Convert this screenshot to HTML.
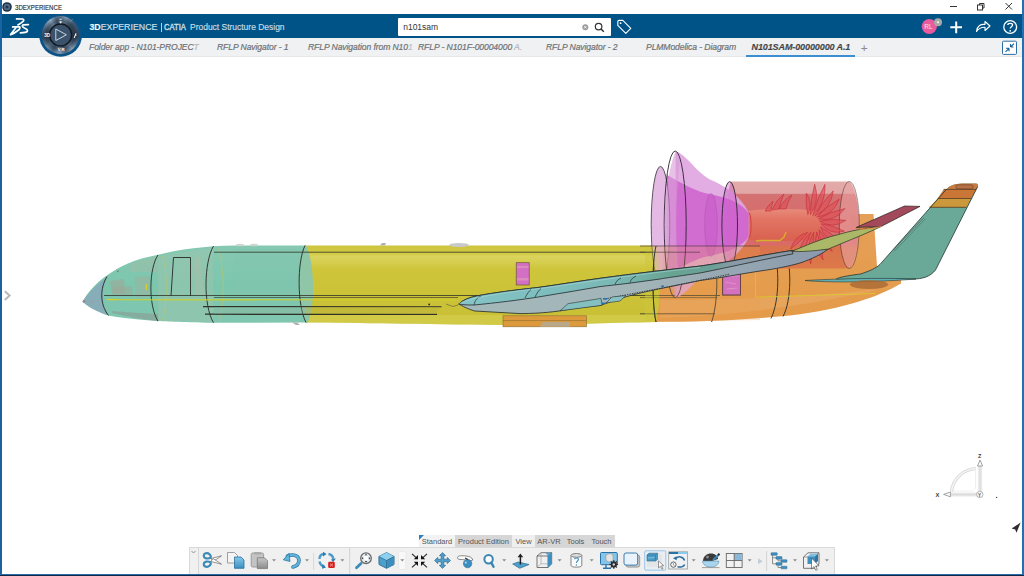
<!DOCTYPE html>
<html><head><meta charset="utf-8">
<style>
*{margin:0;padding:0;box-sizing:border-box}
html,body{width:1024px;height:576px;overflow:hidden;background:#fff;font-family:"Liberation Sans",sans-serif}
.abs{position:absolute}
#titletxt{left:15.2px;top:2.8px;font-size:7.6px;line-height:9px;color:#2a2a2a;-webkit-text-stroke:0.15px #2a2a2a;transform:scaleX(0.8);transform-origin:0 0}
#hdr{left:0;top:14px;width:1024px;height:24px;background:#005386}
#tabs{left:0;top:38px;width:1024px;height:19px;background:#f0f1f3;border-bottom:1px solid #e4e6e8}
.tab{position:absolute;top:42px;font-size:8.6px;line-height:10px;font-style:italic;color:#6e7175;white-space:nowrap;letter-spacing:-0.1px;-webkit-text-stroke:0.2px #6e7175}
.brand{position:absolute;top:21.6px;font-size:8.8px;line-height:11px;color:#cfe0ec;white-space:nowrap;-webkit-text-stroke:0.15px #cfe0ec}
.brand b{color:#fff}
#search{left:398px;top:18px;width:212.5px;height:18px;background:#fff;border-radius:1px}
#search span{position:absolute;left:5.2px;top:4px;font-size:8.5px;line-height:10px;color:#333}
.ttab{position:absolute;top:535px;height:13px;font-size:7.5px;line-height:13px;color:#555;text-align:center;background:#d6d6d6}
#tb{left:189px;top:547px;width:646px;height:27px;background:#f0f0f0;border:1px solid #d9d9d9;border-bottom:none}
.sep{position:absolute;top:551px;width:1px;height:22px;background:#d4d4d4}
.dd{position:absolute;top:560px;width:0;height:0;border-left:2.5px solid transparent;border-right:2.5px solid transparent;border-top:2.5px solid #8a8a8a}
</style></head><body>
<!-- title bar -->
<svg class="abs" style="left:0;top:0" width="1024" height="14">
  <circle cx="7" cy="7" r="4.8" fill="#1c2e40"/>
  <circle cx="7" cy="7" r="3.3" fill="#4e6c88"/>
  <circle cx="7" cy="7" r="1.5" fill="#22364a"/>
  <line x1="950" y1="6.5" x2="957" y2="6.5" stroke="#333" stroke-width="1"/>
  <rect x="977.5" y="5" width="5" height="5" fill="none" stroke="#333" stroke-width="1"/>
  <path d="M979.5 5 V3.5 H984 V8 H982.5" fill="none" stroke="#333" stroke-width="1"/>
  <path d="M1005.5 3 L1012 9.5 M1012 3 L1005.5 9.5" stroke="#333" stroke-width="1"/>
</svg>
<div id="titletxt" class="abs">3DEXPERIENCE</div>
<div id="hdr" class="abs"></div>
<div id="tabs" class="abs"></div>
<!-- borders -->
<div class="abs" style="left:0;top:0;width:1.6px;height:576px;background:#1b62a0"></div>
<div class="abs" style="left:1022px;top:0;width:2px;height:576px;background:#2070b8"></div>
<div class="abs" style="left:0;top:574px;width:1024px;height:1px;background:#2a6aa6"></div>
<div class="abs" style="left:0;top:575px;width:1024px;height:1px;background:#0a2a48"></div>

<!-- 3DS logo -->
<svg class="abs" style="left:0;top:14px" width="90" height="44" viewBox="0 14 90 44">
  <g fill="none" stroke="#fff" stroke-width="1.75" stroke-linecap="round" stroke-linejoin="round">
    <path d="M16.6 18.9 L22.4 19 C24.2 19.2 24 20.6 22.8 21.6 C21.5 22.8 19.8 23.8 17.9 24.9"/>
    <path d="M12.7 26.9 L19.6 26.9 C20.4 27.2 19.8 29 18.6 30 C16.5 31.8 13.5 33.6 10.6 34.6 C12.2 32.3 14.2 30 15.7 28"/>
    <path d="M28.4 24.6 L23.6 24.8 C21.6 25.2 22.2 26.9 24.4 28 C26.6 29 28.2 30 27.2 31.6 C26.4 32.8 23.5 32.8 20.4 32.8"/>
  </g>
  <circle cx="60.6" cy="35.3" r="21.4" fill="#0a5386"/>
</svg>
<div class="abs" style="left:41.7px;top:16.4px;width:37.8px;height:37.8px;border-radius:50%;background:conic-gradient(from 0deg,#56708a 0deg,#7e98b0 18deg,#465e78 45deg,#3a5068 75deg,#2c4056 95deg,#4a6480 115deg,#86a0b6 140deg,#4e6882 162deg,#8aa4ba 185deg,#4a6480 205deg,#6e88a2 228deg,#30465c 262deg,#4a627c 290deg,#7e98b0 315deg,#9ab2c6 325deg,#506a84 345deg,#56708a 360deg)"></div>
<div class="abs" style="left:41.7px;top:16.4px;width:37.8px;height:37.8px;border-radius:50%;background:radial-gradient(circle,rgba(20,30,42,0.4) 54%,rgba(20,30,42,0) 68%,rgba(20,30,42,0) 90%,rgba(16,26,38,0.4) 100%)"></div>
<svg class="abs" style="left:36px;top:14px" width="50" height="44" viewBox="36 14 50 44">
  <circle cx="60.6" cy="35" r="11" fill="#3a526c" stroke="#141a22" stroke-width="1.5"/>
  <path d="M55.8 29 L66.4 34.8 L55.8 40.5 Z" fill="none" stroke="#c9d5df" stroke-width="1" stroke-linejoin="round"/>
  <text x="44.3" y="37.3" font-size="4.6" font-weight="bold" fill="#fff" font-family="Liberation Sans">3D</text>
  <text x="57.8" y="50.7" font-size="4.3" font-weight="bold" fill="#fff" font-family="Liberation Sans">V,R</text>
  <path d="M59.4 19.3 L61.8 19.3 M59.2 21.3 L60.6 23.2 L62 21.3 M60.6 20.8 V23.2" stroke="#fff" stroke-width="0.8" fill="none"/>
  <path d="M74.2 38 L75.9 33.3 M75.1 35.2 L76.6 35" stroke="#fff" stroke-width="1"/>
  <path d="M70 22 L73 19" stroke="#9ab0c4" stroke-width="0.6" opacity="0.7"/>
</svg>
<div class="abs brand" style="left:89.4px"><b>3D</b>EXPERIENCE</div>
<div class="abs" style="left:161px;top:23px;width:1px;height:8.6px;background:#b8cfe0"></div>
<div class="abs brand" style="left:164.1px;transform:scaleX(0.87);transform-origin:0 0;-webkit-text-stroke:0.35px #cfe0ec">CATIA</div>
<div class="abs brand" style="left:190.3px;transform:scaleX(0.962);transform-origin:0 0;color:#c4d8e8">Product Structure Design</div>

<!-- search -->
<div id="search" class="abs"><span>n101sam</span></div>
<svg class="abs" style="left:560px;top:14px" width="90" height="24" viewBox="560 14 90 24">
  <circle cx="585.3" cy="27.2" r="3" fill="#9a9a9a"/>
  <path d="M584 25.9 L586.6 28.5 M586.6 25.9 L584 28.5" stroke="#fff" stroke-width="0.8"/>
  <circle cx="598.6" cy="26.6" r="3.3" fill="none" stroke="#333" stroke-width="1.2"/>
  <path d="M601 29 L603.8 31.8" stroke="#333" stroke-width="1.5"/>
  <path d="M617.8 25.3 L617.8 21.8 Q617.8 20.4 619.2 20.4 L622.8 20.4 L630.8 28.4 L625.8 33.4 Z" fill="none" stroke="#fff" stroke-width="1.1" stroke-linejoin="round"/>
  <circle cx="620.6" cy="23.2" r="0.9" fill="#fff"/>
</svg>

<!-- right header icons -->
<svg class="abs" style="left:900px;top:14px" width="124" height="44" viewBox="900 14 124 44">
  <circle cx="929.3" cy="26.5" r="7.6" fill="#ea5a9c"/>
  <text x="924.2" y="29.4" font-size="6.5" fill="#fde4ef" font-family="Liberation Sans">RL</text>
  <circle cx="938" cy="22.3" r="4" fill="#a9a9a9"/>
  <circle cx="938" cy="22.3" r="1" fill="#fff"/>
  <path d="M950.3 27.3 H962 M956.2 21.5 V33.2" stroke="#fff" stroke-width="2"/>
  <path d="M976.5 31.5 C977 26 980.5 24 985 24.5 L985 21.5 L990 26 L985 30.5 L985 27.2 C981 27 978.5 28.5 976.5 31.5 Z" fill="none" stroke="#fff" stroke-width="1.1" stroke-linejoin="round"/>
  <circle cx="1010.2" cy="27" r="6.4" fill="none" stroke="#fff" stroke-width="1.3"/>
  <path d="M1007.8 25 C1007.8 22.8 1012.6 22.8 1012.6 25 C1012.6 26.6 1010.2 26.8 1010.2 28.6" fill="none" stroke="#fff" stroke-width="1.3"/>
  <circle cx="1010.2" cy="30.8" r="0.9" fill="#fff"/>
  <rect x="1002.5" y="41.2" width="14" height="13.2" rx="1" fill="#fff" stroke="#2e6ea4" stroke-width="1"/>
  <path d="M1005.5 51.8 L1009 48.3 M1009 48.3 L1006 48.3 M1009 48.3 L1009 51.3 M1014 43.6 L1010.5 47 M1010.5 47 L1013.5 47 M1010.5 47 L1010.5 44" stroke="#1d5f96" stroke-width="1.1" fill="none"/>
</svg>

<!-- tabs -->
<div class="tab" style="left:89px">Folder app - N101-PROJEC<span style="opacity:.45">T</span></div>
<div class="tab" style="left:217px">RFLP Navigator - 1</div>
<div class="tab" style="left:308px">RFLP Navigation from N10<span style="opacity:.4">1</span></div>
<div class="tab" style="left:418px">RFLP - N101F-00004000 <span style="opacity:.5">A.</span></div>
<div class="tab" style="left:546px">RFLP Navigator - 2</div>
<div class="tab" style="left:646px">PLMModelica - Diagram</div>
<div class="tab" style="left:751.5px;font-size:9px;font-weight:bold;color:#3b3e42">N101SAM-00000000 A.1</div>
<div class="abs" style="left:746px;top:54.5px;width:109px;height:2px;background:#3b8fd0"></div>
<div class="tab" style="left:861px;top:42.5px;font-style:normal;font-size:11px;color:#a0a3a6">+</div>


<!-- AIRPLANE -->
<svg class="abs" style="left:0;top:0" width="1024" height="576" viewBox="0 0 1024 576">
<defs>
  <linearGradient id="yel" x1="0" y1="0" x2="0" y2="1">
    <stop offset="0" stop-color="#cdc53c"/>
    <stop offset="0.1" stop-color="#d2ca45"/>
    <stop offset="0.14" stop-color="#dad45e"/>
    <stop offset="0.3" stop-color="#cec53a"/>
    <stop offset="1" stop-color="#c9bf35"/>
  </linearGradient>
  <linearGradient id="teal" x1="0" y1="0" x2="0" y2="1">
    <stop offset="0" stop-color="#86c9b2"/>
    <stop offset="0.5" stop-color="#7dc6ae"/>
    <stop offset="1" stop-color="#80c6b0"/>
  </linearGradient>
  <linearGradient id="org" x1="0" y1="0" x2="0" y2="1">
    <stop offset="0" stop-color="#e5a058"/>
    <stop offset="1" stop-color="#e49a48"/>
  </linearGradient>
  <linearGradient id="redc" x1="0" y1="0" x2="0" y2="1">
    <stop offset="0" stop-color="#e2a6a6"/>
    <stop offset="0.135" stop-color="#e0a2a2"/>
    <stop offset="0.15" stop-color="#d26a6a"/>
    <stop offset="0.72" stop-color="#d66260"/>
    <stop offset="0.75" stop-color="#d8704e"/>
    <stop offset="1" stop-color="#dc7648"/>
  </linearGradient>
  <linearGradient id="spin" x1="0" y1="0" x2="0" y2="1">
    <stop offset="0" stop-color="#e88a7a"/>
    <stop offset="0.3" stop-color="#e27565"/>
    <stop offset="1" stop-color="#d8604e"/>
  </linearGradient>
</defs>

<!-- ===== FUSELAGE ===== -->
<!-- orange rear fuselage -->
<path d="M650 245.5 L851 245.5 L851 214 L873.5 214 L877 266 L901 274 L901 283.5 C880 296 845 309 790 315.5 C740 320.5 700 322 650 322 Z" fill="url(#org)"/>
<path d="M660 300 C720 300 800 298 890 288 L896 285 C840 300 760 312 700 316 L660 318 Z" fill="#eab070" opacity="0.45"/>
<!-- yellow fuselage -->
<path d="M306 245.5 L656 245.5 C661 265 661 305 656 322 C600 323 560 325.5 500 325 C420 324 360 323 306 322.5 Z" fill="url(#yel)"/>
<path d="M306 315 L656 315 L656 322 C600 323 560 325.5 500 325 C420 324 360 323 306 322.5 Z" fill="#dcd65a" opacity="0.45"/>
<!-- teal forward fuselage -->
<path d="M83 301 C87 293 96 283 106 276 C120 266 135 259 157 255 C180 249 205 246 235 245.5 L306 245.5 C311 265 314 290 312.5 300 C312 310 310 318 307.5 322.5 L212 322.8 C180 322 165 321.5 157 321 C130 319 115 317 106 315 C96 310 88 305 83 301 Z" fill="url(#teal)"/>
<!-- lighter band before yellow -->
<path d="M305 245.5 C297 265 297 305 306 322.5 L307.5 322.5 C312 310 314 290 312.5 275 C312 262 309 252 306 245.5 Z" fill="#90c6a8"/>
<!-- nose cone -->
<path d="M82.6 301.5 C86 296 96 284 108 276.7 C101 288 100.5 304 108.7 315.1 C100 313 90 309 82.6 301.5 Z" fill="#87aeb8"/>
<circle cx="84" cy="301.5" r="1.4" fill="#8a8e92"/>
<circle cx="92" cy="302" r="1.2" fill="#a09ca4"/>
<!-- cockpit interior shades -->
<path d="M110 281 L124 279 L125 293 L112 294 Z" fill="#a2a698" opacity="0.55"/>
<path d="M112 287 L132 286 L133 296 L113 296 Z" fill="#a0a494" opacity="0.45"/>
<path d="M135 277 L150 276 L150 297 L135 297 Z" fill="#a4ae9c" opacity="0.45"/>
<path d="M130 264 C140 260 150 258 158 256 L158 272 L130 272 Z" fill="#a8b8a4" opacity="0.4"/>
<path d="M112 313 C125 316 140 319 158 321.2 L158 314 C140 313 125 312 112 311 Z" fill="#8a9890" opacity="0.55"/>
<path d="M158 256 L213 248 L213 322 L158 321 Z" fill="#a9c2ae" opacity="0.35"/>
<path d="M193 258 L200 256 L204 296 L196 296 Z" fill="#b0bca8" opacity="0.4"/>
<path d="M235 249 L300 249 L300 296 L235 296 Z" fill="#86c4ae" opacity="0.3"/>
<path d="M106.7 299.5 L117 299.5" stroke="#e0d020" stroke-width="1.2"/>
<path d="M146.5 284 L146.5 290" stroke="#d8cc30" stroke-width="1.4"/>
<path d="M117 272 L119 270.5" stroke="#555" stroke-width="0.7"/>
<!-- frame rings -->
<g fill="none" stroke="#252a26" stroke-width="0.9">
  <path d="M107 276.5 C100 288 99.5 304 108.5 315.5"/>
  <path d="M158 255 C149 268 148 305 158 321.2"/>
  <path d="M213.5 246 C204 262 203 305 213.5 322.8"/>
  <path d="M305 245.5 C297 262 297 305 306 322.5"/>
  <path d="M656 246 C652 262 652 305 656 322"/>
  <path d="M712 246 C718 262 719 300 711.6 322"/>
  <path d="M774 250 C779 265 780 300 771 318.5"/>
  <path d="M786 250 C791 265 792 300 783 316.5"/>
  <path d="M171 296 L173.5 257.5 L190.5 257.5 L190.5 296"/>
</g>
<g fill="none" stroke="#c8c860" stroke-width="0.6" opacity="0.8">
  <path d="M218 248 C224 262 225 305 219 322"/>
  <path d="M162 256 C168 270 168 305 162 321"/>
</g>
<!-- longitudinal lines -->
<g stroke="#2e3226" stroke-width="0.8" fill="none">
  <path d="M214 252.2 L655 252.2"/>
  <path d="M104 295.5 L720 295.5"/>
  <path d="M214 297.5 L458 297.5" stroke-width="0.6"/>
  <path d="M203 306.6 L441.5 306.8" stroke-width="1.1"/>
  <path d="M205 314.2 L437 314.4" stroke-width="1.3"/>
  <path d="M640 313.8 L715 313.8"/>
  <path d="M640 297.6 L717 297.6" stroke-width="0.6"/>
</g>
<path d="M306 307 L440 307 L436 314 L306 314 Z" fill="#b9b03e" opacity="0.45"/>
<path d="M214 307 L306 307 L306 314 L214 314 Z" fill="#8fae98" opacity="0.35"/>
<path d="M110 299.7 L456 300" stroke="#cfd02a" stroke-width="1.1"/>
<circle cx="429.2" cy="304.4" r="0.9" fill="#222"/>
<path d="M446 304 L450 305.5 L453 306.5 L458 305" stroke="#444" stroke-width="0.5" fill="none"/>
<path d="M755 297.2 L875 293.5 M755.5 240 L755.5 297" stroke="#d9cd2a" stroke-width="0.8" fill="none"/>
<!-- top bumps -->
<ellipse cx="240" cy="245" rx="4" ry="1.2" fill="#cfd6d0"/>
<ellipse cx="254" cy="245" rx="4" ry="1.2" fill="#cfd6d0"/>
<path d="M380 245.5 L382 243 L386 243 L385 245.5 Z" fill="#b0b0b0"/>
<ellipse cx="459" cy="245" rx="10" ry="2" fill="#c9c9c9"/>
<path d="M292 322.5 L296 325 L300 325 L297 322.5 Z" fill="#b0b0b0"/>
<!-- pink windows -->
<rect x="516.2" y="262.7" width="13" height="22.3" fill="#d46fc6" stroke="#6a5a30" stroke-width="0.7"/>
<rect x="517" y="266" width="11.5" height="2" fill="#e09ab8" opacity="0.7"/>
<rect x="517" y="278" width="11.5" height="2.5" fill="#e09ab8" opacity="0.7"/>
<rect x="722.7" y="272" width="17.7" height="23" fill="#d46ec8" stroke="#5a3a40" stroke-width="0.8"/>
<!-- belly fairing -->
<rect x="503" y="315.8" width="83.5" height="11" fill="#dd9a3c" stroke="#8a6a30" stroke-width="0.6"/>
<path d="M503 320.6 L586 320.6" stroke="#8a6a30" stroke-width="0.6"/>
<path d="M540 326.8 L543 322 L570 322 L570 326.8 Z" fill="#b8a888"/>

<!-- ===== ENGINE ===== -->
<path d="M731 181.5 L849.3 181.5 C862 195 862 255 849.3 268.5 L731 268.5 C725 255 725 195 731 181.5 Z" fill="url(#redc)" opacity="0.95"/>
<ellipse cx="849.3" cy="225" rx="10" ry="43.5" fill="#eaa6a6" opacity="0.55" stroke="#2a2020" stroke-width="0.8"/>
<!-- spinner cone -->
<path d="M747 211 C770 208 800 209 817 211 L822 225 L817 239.5 C800 241 770 242 747 239.5 Z" fill="url(#spin)"/>
<ellipse cx="748.5" cy="225.2" rx="2.6" ry="13" fill="#e07868" stroke="#cc3a3a" stroke-width="0.9"/>
<!-- fan blades -->
<g fill="#de4c54" fill-opacity="0.6" stroke="#c42a3a" stroke-width="0.6" stroke-opacity="0.95">
<path d="M807.8 214.5 Q813.6 203.3 806.3 193.1 Q805.2 203.9 807.8 214.5 Z"/>
<path d="M810.4 214.7 Q820.0 200.5 814.7 184.2 Q810.5 199.2 810.4 214.7 Z"/>
<path d="M812.7 215.6 Q826.2 202.9 825.0 184.3 Q816.8 199.2 812.7 215.6 Z"/>
<path d="M814.7 216.1 Q831.1 208.7 833.2 190.9 Q822.1 202.1 814.7 216.1 Z"/>
<path d="M816.6 217.1 Q833.6 215.4 839.2 199.2 Q826.3 206.2 816.6 217.1 Z"/>
<path d="M818.3 218.8 Q834.9 222.4 844.9 208.6 Q830.7 211.4 818.3 218.8 Z"/>
<path d="M819.5 221.1 Q833.0 229.5 845.8 220.3 Q832.6 218.3 819.5 221.1 Z"/>
<path d="M821.0 223.7 Q830.1 235.4 844.3 231.2 Q833.3 225.3 821.0 223.7 Z"/>
<path d="M820.6 226.9 Q824.6 240.9 839.1 241.8 Q831.3 232.6 820.6 226.9 Z"/>
<path d="M819.1 229.8 Q818.6 244.9 832.3 251.3 Q827.6 239.4 819.1 229.8 Z"/>
<path d="M816.8 232.0 Q812.2 247.7 823.1 259.9 Q822.1 245.5 816.8 232.0 Z"/>
<path d="M813.7 232.2 Q804.7 247.3 810.7 263.9 Q814.2 248.2 813.7 232.2 Z"/>
<path d="M810.9 232.3 Q797.9 243.7 797.8 261.0 Q806.1 247.5 810.9 232.3 Z"/>
<path d="M807.8 232.3 Q794.6 235.9 790.6 249.0 Q800.4 242.0 807.8 232.3 Z"/>
<path d="M772 210 Q776 200 784 194 Q780 203 779 209 Z"/>
<path d="M779 209 Q784 199 792 195 Q787 203 786 209 Z"/>
<path d="M765 211 Q768 205 773 201 Q771 207 771 211 Z"/>
</g>
<!-- yellow pipe -->
<path d="M756 241 L760 240.5 L780 240.5 L784 237 L786 232" stroke="#d7b02a" stroke-width="1.3" fill="none"/>

<!-- ===== NOZZLE (magenta) ===== -->
<path d="M675.6 151 C688 156 694 170 710 179.5 C725 186 740 195 748.5 212 L748.5 238 C740 255 725 264 710 270.5 C694 280 688 294 675.6 297.8 Z" fill="#dfa6df" opacity="0.92"/>
<path d="M667 175 C680 182 695 192 712 194.5 C728 198 742 203 748.5 213 L748.5 237 C742 247 728 252 712 255.5 C695 258 680 268 667 275 Z" fill="#cd5dcd" opacity="0.8"/>
<ellipse cx="660.5" cy="224.4" rx="9.3" ry="58" fill="#dfb0de" opacity="0.85" stroke="#2a2230" stroke-width="0.9"/>
<path d="M652 224 C652 200 655 175 660.5 166.5 C662 170 664 185 664 224 C664 260 662 275 660.5 282.5 C655 275 652 250 652 224 Z" fill="#e4b8e4" opacity="0.6"/>
<ellipse cx="675.2" cy="224.4" rx="11" ry="73.4" fill="none" stroke="#2a2230" stroke-width="0.9"/>
<path d="M675.6 151 C668 170 664.5 200 664.5 224 C664.5 250 668 280 675.6 297.8 L680 290 C675 250 675 200 680 160 Z" fill="#d79ad6" opacity="0.6"/>
<ellipse cx="711" cy="225" rx="6.3" ry="31.5" fill="#c858c8" opacity="0.5" stroke="#8a4a90" stroke-width="0.6"/>
<ellipse cx="729.7" cy="225" rx="7.8" ry="43.3" fill="#cc5ccc" fill-opacity="0.4" stroke="#2a2230" stroke-width="0.9"/>

<!-- fuselage overlay over nozzle -->
<path d="M656 246 L760 246 L760 320 L656 322 C661 305 661 265 656 246 Z" fill="#e8a050" opacity="0.25"/>
<path d="M645 246 L656 246 C661 265 661 305 656 322 L645 322 Z" fill="#cdc53c" opacity="0.45"/>
<path d="M640 246 L760 246 M640 252.2 L700 252.2" stroke="#3a2a30" stroke-width="0.7" opacity="0.8"/>
<path d="M656 246 C652 262 652 305 656 322" fill="none" stroke="#252a26" stroke-width="0.9"/>
<rect x="722.7" y="272" width="17.7" height="23" fill="#d070c4" opacity="0.75"/>
<path d="M725 276 L738 276 M725 282 L736 284 M727 289 L737 288" stroke="#e8a0d0" stroke-width="1" opacity="0.7"/>
<rect x="722.7" y="272" width="17.7" height="23" fill="none" stroke="#5a3a40" stroke-width="0.8"/>
<!-- ===== MAIN WING ===== -->
<defs>
  <linearGradient id="leb" x1="460" y1="0" x2="800" y2="0" gradientUnits="userSpaceOnUse">
    <stop offset="0" stop-color="#84c4c6"/>
    <stop offset="0.45" stop-color="#7ab8b6"/>
    <stop offset="0.62" stop-color="#68a492"/>
    <stop offset="0.74" stop-color="#6aa096"/>
    <stop offset="0.8" stop-color="#8a9aa6"/>
    <stop offset="1" stop-color="#8a98a6"/>
  </linearGradient>
  <linearGradient id="msf" x1="460" y1="0" x2="830" y2="0" gradientUnits="userSpaceOnUse">
    <stop offset="0" stop-color="#a4b8ba"/>
    <stop offset="0.5" stop-color="#a2b4b8"/>
    <stop offset="1" stop-color="#8a98ac"/>
  </linearGradient>
</defs>
<!-- main surface -->
<path d="M458.8 304 C463 300 469 297.5 476.4 296 C495 292.5 515 290 538 287.5 C560 284.5 580 281 600 278.3 C635 273.5 665 270 700 266.1 C735 261 765 254.5 792 250.5 L828.3 249 C822 254 812 259 800 263 C790 266 775 269 760 271 C740 274 720 278 700 280.5 C680 285 650 290 627 296.5 C618 299 610 302 600 305.5 C585 307 570 309 559 311 C545 313 530 313.6 520 313.6 L474.6 311 C468 309 462 306 458.8 304 Z" fill="url(#msf)" stroke="#22292b" stroke-width="0.8"/>
<!-- flaps -->
<path d="M560 310.8 L568 303.7 L601 298.4 L602 305.3 Z" fill="#84c0c0" stroke="#2a3436" stroke-width="0.6"/>


<path d="M605 299 C640 292 680 285 730 274" fill="none" stroke="#3a4446" stroke-width="1" stroke-dasharray="1.5 1"/>
<path d="M606 303 L612 297 L626 295.5 L620 301 Z" fill="#88c2c2" stroke="#2a3436" stroke-width="0.6"/>

<g fill="#2a70b0"><rect x="603" y="298" width="4" height="1.6"/><rect x="602" y="302.5" width="4" height="1.6"/><rect x="661" y="285.5" width="3" height="1.4"/></g>
<!-- leading edge band -->
<path d="M458.8 304 C463 300 469 297.5 476.4 296 C495 292.5 515 290 538 287.5 C560 284.5 580 281 600 278.3 C635 273.5 665 270 700 266.1 C735 261 765 254.5 792 250.5 L793 253.8 C765 259 735 266 700 273 C680 276 665 278 660 279 C640 282 620 284.5 600 286.6 C580 290 560 293.5 540 296.7 C520 300 495 303 474 305 C467 305 462 304.8 458.8 304 Z" fill="url(#leb)" stroke="#22292b" stroke-width="0.8"/>
<path d="M474 305 C475 300 477.5 297.5 481 296" stroke="#22292b" stroke-width="0.7" fill="none"/>
<path d="M459.5 303.5 C470 298.5 490 294 540 288.5 C600 280 660 271.5 700 267.5" stroke="#a8dada" stroke-width="0.8" fill="none" opacity="0.7"/>
<path d="M525 298 C527 294 529 291 531 289.5 M535 297 C537 293 539 290 541 288.5 M615 284.5 C616 281.5 618 279.5 621 278 M630 282.5 C631 279.5 633 277.5 636 276" stroke="#22292b" stroke-width="0.7" fill="none"/>
<!-- olive wingtip -->
<path d="M791.7 251.4 C805 246 820 239 838.6 234.5 C850 231 865 228 881 226.5 C870 232 850 240 828.3 249 C815 251 800 252 791.7 251.4 Z" fill="#abb868" stroke="#2a3020" stroke-width="0.7"/>
<!-- winglet maroon -->
<path d="M856 227.5 L904.5 206 L920 206.4 L881 226.5 Z" fill="#a24a5c" stroke="#2a2020" stroke-width="0.7"/>
<path d="M855 228 C860 230 870 229 881 226.5" stroke="#d88a40" stroke-width="1.2" fill="none"/>

<!-- ===== VERTICAL TAIL ===== -->
<path d="M946.7 189 C950 185.5 955 183.8 962 183.6 L976 183.6 C978 183.8 978.3 185 977.7 186.5 L935.5 270 C930 277 922 279 913 279 L836 279.5 C836 278 845 276 860.5 274 C870 271 876 268 880 264.4 Z" fill="#6aa998"/>
<path d="M946.7 189 C950 185.5 955 183.8 962 183.6 L976 183.6 C978 183.8 978.3 185 977.7 186.5 L976.2 189.4 L943.6 189.4 Z" fill="#c97c44"/>
<rect x="956" y="184.8" width="17" height="4" rx="1.5" fill="#b87048" stroke="#6a4020" stroke-width="0.6"/>
<path d="M943.6 189.4 L976.2 189.4 L971.1 198.5 L937.7 198.5 Z" fill="#c97636"/>
<path d="M937.7 198.5 L971.1 198.5 L966.4 207.3 L929.4 207.3 Z" fill="#cb983c"/>
<path d="M943.6 189.4 L976.2 189.4 M937.7 198.5 L971.1 198.5 M929.4 207.3 L966.4 207.3" stroke="#5a3a20" stroke-width="0.8"/>
<path d="M924.4 218.6 L893.9 250.5" stroke="#4e7e74" stroke-width="2.2" />
<path d="M924.4 218.6 L893.9 250.5" stroke="#9ac4b8" stroke-width="0.8" />
<path d="M946.7 189 L880 264.4 C876 268 870 271 860.5 274 C845 276 836 278 836 279.5 L913 279 C922 279 930 277 935.5 270 L977.7 186.5" fill="none" stroke="#263632" stroke-width="0.8"/>
<!-- horizontal stab sliver -->
<path d="M805 280.5 C830 279 880 277.5 916 279 C880 282 830 283 805 280.5 Z" fill="#5fb0b4" stroke="#2a3a36" stroke-width="0.6"/>
<ellipse cx="869" cy="284.5" rx="19" ry="4.5" fill="#a86a34" opacity="0.8"/>
</svg>

<!-- viewport left arrow -->
<svg class="abs" style="left:0;top:280px" width="20" height="30">
  <path d="M4.8 11.3 L9.6 15.6 L4.8 19.9" fill="none" stroke="#b8b8b8" stroke-width="2"/>
</svg>

<!-- compass axes -->
<svg class="abs" style="left:920px;top:440px" width="104" height="100" viewBox="920 440 104 100">
  <defs>
    <linearGradient id="axv" x1="0" y1="0" x2="1" y2="0"><stop offset="0" stop-color="#f2f2f2"/><stop offset="0.5" stop-color="#dcdcdc"/><stop offset="1" stop-color="#efefef"/></linearGradient>
    <linearGradient id="axh" x1="0" y1="0" x2="0" y2="1"><stop offset="0" stop-color="#f2f2f2"/><stop offset="0.5" stop-color="#dcdcdc"/><stop offset="1" stop-color="#efefef"/></linearGradient>
  </defs>
  <path d="M975.7 468.5 A 26 26 0 0 0 951.5 491.5" fill="none" stroke="#d4d4d4" stroke-width="3.2"/>
  <path d="M975.7 468.5 A 26 26 0 0 0 951.5 491.5" fill="none" stroke="#f4f4f4" stroke-width="1.6"/>
  <path d="M975.5 470 L975.5 488 L972.5 491 L953 491" fill="none" stroke="#ececec" stroke-width="0.8"/>
  <rect x="977.8" y="466" width="4.4" height="26.5" fill="url(#axv)"/>
  <rect x="950.4" y="492.3" width="27.5" height="4.4" fill="url(#axh)"/>
  <path d="M977.6 466 L980 460.1 L982.6 466 Z" fill="#fff" stroke="#8a8a8a" stroke-width="0.8" stroke-linejoin="round"/>
  <path d="M950.4 492 L943.6 494.4 L950.4 496.8 Z" fill="#fff" stroke="#8a8a8a" stroke-width="0.8" stroke-linejoin="round"/>
  <circle cx="979.8" cy="494.5" r="3.2" fill="#fafafa" stroke="#9a9a9a" stroke-width="0.7"/>
  <text x="977.9" y="457.7" font-size="5.6" font-weight="bold" fill="#3a3a3a" font-family="Liberation Sans">Z</text>
  <text x="935.5" y="497" font-size="5.8" font-weight="bold" fill="#3a3a3a" font-family="Liberation Sans">X</text>
  <text x="978.1" y="496.6" font-size="4.6" font-weight="bold" fill="#555" font-family="Liberation Sans">Y</text>
  <circle cx="996.6" cy="497.4" r="0.7" fill="#444"/>
  <path d="M1011.7 528.5 L1020.6 522.6 L1016.5 532.8 L1015.2 529.5 Z" fill="#2e2e2e"/>
</svg>

<!-- toolbar tabs -->
<div class="ttab" style="left:419px;width:36px;background:#f2f2f2">Standard</div>
<svg class="abs" style="left:419px;top:535px" width="6" height="6"><path d="M0 0 H5 L0 5 Z" fill="#2a7fc0"/></svg>
<div class="ttab" style="left:455px;width:57px">Product Edition</div>
<div class="ttab" style="left:512px;width:23px;background:#efefef">View</div>
<div class="ttab" style="left:535px;width:28px">AR-VR</div>
<div class="ttab" style="left:563px;width:25px">Tools</div>
<div class="ttab" style="left:588px;width:27px">Touch</div>

<!-- toolbar -->
<div id="tb" class="abs"></div>
<div class="abs" style="left:198px;top:548px;width:1px;height:26px;background:#d6d6d6"></div>
<svg class="abs" style="left:189px;top:547px" width="10" height="10"><path d="M2.5 4 L4.5 6 L6.5 4" fill="none" stroke="#888" stroke-width="0.9"/></svg>
<svg class="abs" style="left:180px;top:546px" width="664" height="30" viewBox="180 546 664 30">
<defs>
  <linearGradient id="bl1" x1="0" y1="0" x2="0" y2="1">
    <stop offset="0" stop-color="#86c8ea"/>
    <stop offset="1" stop-color="#3d8fc0"/>
  </linearGradient>
  <linearGradient id="gr1" x1="0" y1="0" x2="0" y2="1">
    <stop offset="0" stop-color="#c8c8c8"/>
    <stop offset="1" stop-color="#8a8a8a"/>
  </linearGradient>
</defs>
<!-- dropdown arrows -->
<g fill="#8c8c8c">
  <path d="M272 559.3 L276 559.3 L274 561.5 Z"/>
  <path d="M305 559.3 L309 559.3 L307 561.5 Z"/>
  <path d="M340.4 559.3 L344.4 559.3 L342.4 561.5 Z"/>
  <path d="M502.2 559.3 L506.2 559.3 L504.2 561.5 Z"/>
  <path d="M557.6 559.3 L561.6 559.3 L559.6 561.5 Z"/>
  <path d="M589.7 559.3 L593.7 559.3 L591.7 561.5 Z"/>
  <path d="M691.7 559.3 L695.7 559.3 L693.7 561.5 Z"/>
  <path d="M747.6 559.3 L751.6 559.3 L749.6 561.5 Z"/>
  <path d="M793 559.3 L797 559.3 L795 561.5 Z"/>
  <path d="M824.9 559.3 L828.9 559.3 L826.9 561.5 Z"/>
</g>
<!-- separators -->
<g fill="#d2d2d2">
  <rect x="313.3" y="553" width="0.8" height="17"/>
  <rect x="349.2" y="548" width="1" height="26"/>
  <rect x="766.2" y="551" width="0.9" height="20"/>
</g>
<!-- scissors -->
<g>
  <path d="M211 558.5 L221.6 555.8 L213 561.5 Z" fill="#fff" stroke="#6a6a6a" stroke-width="0.7"/>
  <path d="M211 561.5 L221.6 564.2 L213 558.5 Z" fill="#fff" stroke="#6a6a6a" stroke-width="0.7"/>
  <path d="M210.5 557.8 C208 559 204 558.8 203.8 556 C203.6 553 207.5 552.2 209.5 554.2 C210.8 555.5 211 557 210.5 557.8 Z" fill="none" stroke="#3d8ab5" stroke-width="2.1"/>
  <path d="M210.5 562.2 C208 561 204 561.2 203.8 564 C203.6 567 207.5 567.8 209.5 565.8 C210.8 564.5 211 563 210.5 562.2 Z" fill="none" stroke="#3d8ab5" stroke-width="2.1"/>
</g>
<!-- copy -->
<path d="M227.5 552.5 L234.5 552.5 L237.5 555.5 L237.5 563 L227.5 563 Z" fill="#f4f4f4" stroke="#8a8a8a" stroke-width="0.8"/>
<path d="M234.5 557 L241 557 L244 560 L244 568.3 L234.5 568.3 Z" fill="url(#bl1)" stroke="#2a6f9c" stroke-width="0.8"/>
<!-- paste -->
<rect x="251.2" y="553" width="12.4" height="14" rx="1.5" fill="#c4c4c4" stroke="#8e8e8e" stroke-width="0.8"/>
<rect x="254" y="552" width="7" height="2.4" rx="0.8" fill="#aaa"/>
<path d="M257.3 557.8 L264.5 557.8 L267.5 560.8 L267.5 568.6 L257.3 568.6 Z" fill="url(#gr1)" stroke="#777" stroke-width="0.8"/>
<!-- undo -->
<path d="M287.5 556 C294 553.5 299 556 299 560.5 C299 564 296.5 566 293 567" fill="none" stroke="#2e79a6" stroke-width="3.6" stroke-linecap="round"/>
<path d="M287.5 556 C294 553.5 299 556 299 560.5 C299 564 296.5 566 293 567" fill="none" stroke="#62b4dc" stroke-width="2.2" stroke-linecap="round"/>
<path d="M283.3 559.8 L289 553.3 L290 561.5 Z" fill="#62b4dc" stroke="#2e79a6" stroke-width="0.8" stroke-linejoin="round"/>
<!-- sync -->
<g fill="none" stroke="#4a9ccb" stroke-width="2.4">
  <path d="M319.5 559 C319.5 556 321.5 554.2 324 554"/>
  <path d="M328.5 554 C331 554.5 333 556.5 333.3 559"/>
  <path d="M319.5 561.5 C320 564 322 566 324.5 566.5"/>
</g>
<g fill="#2e79a6">
  <path d="M323 551.8 L326.5 554 L323 556.6 Z"/>
  <path d="M331 559.5 L336 558.5 L333 562 Z"/>
  <path d="M322.5 564.2 L326 567.5 L322 568.8 Z"/>
</g>
<rect x="328.2" y="561.8" width="6.6" height="6.2" rx="1.2" fill="#d81c1c"/>
<path d="M330 563.6 L333 566.4 M333 563.6 L330 566.4" stroke="#f6b0b0" stroke-width="0.8"/>
<!-- magnifier zoom-fit -->
<path d="M361 563.5 L356.5 567.8" stroke="#3c8ab8" stroke-width="2.8" stroke-linecap="round"/>
<circle cx="366" cy="558.2" r="5.3" fill="#e6eef3" stroke="#6a6a6a" stroke-width="1.3"/>
<rect x="364" y="556.3" width="4" height="3.8" fill="#fff"/>
<g fill="#333">
  <path d="M366 553.8 L367.3 555.3 L364.7 555.3 Z"/>
  <path d="M366 562.6 L367.3 561.1 L364.7 561.1 Z"/>
  <path d="M361.6 558.2 L363.1 556.9 L363.1 559.5 Z"/>
  <path d="M370.4 558.2 L368.9 556.9 L368.9 559.5 Z"/>
</g>
<!-- blue cube -->
<path d="M386.5 552.6 L394.1 556.5 L394 564.5 L386.5 568.3 L379 564.5 L378.9 556.5 Z" fill="#4d9fcb" stroke="#2a6a90" stroke-width="0.9" stroke-linejoin="round"/>
<path d="M386.5 552.6 L394.1 556.5 L386.5 560.5 L378.9 556.5 Z" fill="#8fd0ee"/>
<path d="M386.5 560.5 L394 556.5 L394 564.5 L386.5 568.3 Z" fill="#3f8dbd"/>
<path d="M378.9 556.5 L386.5 560.5 L394.1 556.5 M386.5 560.5 L386.5 568.3" fill="none" stroke="#2a6a90" stroke-width="0.7"/>
<!-- dropdown box -->
<rect x="398.4" y="551.5" width="7.5" height="18" rx="1" fill="#f8f8f8" stroke="#e2e2e2" stroke-width="0.6"/>
<path d="M400.3 559.3 L404.3 559.3 L402.3 561.5 Z" fill="#8c8c8c"/>
<!-- compress arrows -->
<g stroke="#222" stroke-width="1.1" fill="#111">
  <path d="M412 553.8 L417.5 558.8" fill="none"/>
  <path d="M427 553.8 L421.5 558.8" fill="none"/>
  <path d="M412 567.3 L417.5 562.3" fill="none"/>
  <path d="M427 567.3 L421.5 562.3" fill="none"/>
</g>
<g fill="#111">
  <path d="M418 559.3 L418 555 L413.8 559.3 Z"/>
  <path d="M421 559.3 L421 555 L425.2 559.3 Z"/>
  <path d="M418 561.8 L418 566 L413.8 561.8 Z"/>
  <path d="M421 561.8 L421 566 L425.2 561.8 Z"/>
</g>
<!-- pan -->
<path d="M442.5 552.6 L445.6 555.7 L443.8 555.7 L443.8 559.2 L447.3 559.2 L447.3 557.4 L450.4 560.5 L447.3 563.6 L447.3 561.8 L443.8 561.8 L443.8 565.3 L445.6 565.3 L442.5 568.4 L439.4 565.3 L441.2 565.3 L441.2 561.8 L437.7 561.8 L437.7 563.6 L434.6 560.5 L437.7 557.4 L437.7 559.2 L441.2 559.2 L441.2 555.7 L439.4 555.7 Z" fill="#4d9fcb" stroke="#2a6a90" stroke-width="0.7" stroke-linejoin="round"/>
<!-- rotate -->
<path d="M457.5 557.5 C458 555.5 462 555.5 466 556 C469 556.3 472 557 472.8 560 L470 561 C467 560 463 559.5 460 559.5 C458.5 559.3 457.3 558.8 457.5 557.5 Z" fill="#fbfbfb" stroke="#6a6a6a" stroke-width="0.8"/>
<circle cx="467.6" cy="563.6" r="4.2" fill="#3c8fc0" stroke="#2a6a90" stroke-width="0.6"/>
<circle cx="465.8" cy="562.6" r="1.1" fill="#a8d6ee"/>
<path d="M465 558 L468 559.5" stroke="#333" stroke-width="1.2"/>
<!-- zoom blue -->
<circle cx="488.6" cy="559.3" r="4.2" fill="#fff" stroke="#3a86b0" stroke-width="2"/>
<path d="M491.3 562.6 L493.5 566.8" stroke="#3a86b0" stroke-width="2.4" stroke-linecap="round"/>
<!-- normal view -->
<path d="M512.7 564 L518.2 562 L529.1 564.5 L519.7 568.3 Z" fill="#4f9fcc" stroke="#2a6a90" stroke-width="0.7" stroke-linejoin="round"/>
<path d="M520.4 564.5 L520.4 556" stroke="#222" stroke-width="1.5"/>
<path d="M517.6 557.2 L520.4 553.5 L523.2 557.2 Z" fill="#222"/>
<!-- wireframe cube -->
<g fill="none" stroke="#555" stroke-width="0.8">
  <path d="M537 556 L541 552.7 L551.7 552.7 L551.7 563.8 L548 567.5 L537 567.5 Z"/>
  <path d="M537 556 L548 556 L548 567.5 M548 556 L551.7 552.7"/>
  <path d="M541 552.7 L541 563.8 L551.7 563.8 M541 563.8 L537 567.5" stroke="#999" stroke-width="0.6"/>
</g>
<path d="M545.3 552.8 L551.6 552.8 L551.6 563.7 L548.2 567.2 L548.2 556 Z" fill="#4d9fcb" opacity="0.9"/>
<path d="M548 556 L548 567.5 L551.7 563.8 L551.7 552.7 Z" fill="#3c8fc0"/>
<!-- cylinder ? -->
<path d="M571 555.4 L571 565.4 C571 567.8 581.8 567.8 581.8 565.4 L581.8 555.4" fill="#fafafa" stroke="#666" stroke-width="0.8"/>
<ellipse cx="576.4" cy="555.4" rx="5.4" ry="1.9" fill="#ddd" stroke="#666" stroke-width="0.8"/>
<path d="M574.5 559.3 C574.5 557.5 578.5 557.5 578.5 559.3 C578.5 561 576.4 561 576.4 563" fill="none" stroke="#3d8fc0" stroke-width="1.1"/>
<circle cx="576.4" cy="565" r="0.7" fill="#3d8fc0"/>
<!-- monitor gear -->
<rect x="600.5" y="552.5" width="16.8" height="12.2" rx="1" fill="#84c6ea" stroke="#2a72a6" stroke-width="1"/>
<path d="M606 565 L606 567.5 M603 568.2 L611 568.2" stroke="#2a72a6" stroke-width="1.4"/>
<path d="M606 554.8 L610 553.5 L613 555 L613 560.5 L609 562 L606 560.5 Z" fill="#e4e4e4" stroke="#8a8a8a" stroke-width="0.5"/>
<path d="M618.05 563.81 L618.05 565.19 L616.95 565.05 L616.42 566.34 L617.29 567.02 L616.32 567.99 L615.64 567.12 L614.35 567.65 L614.49 568.75 L613.11 568.75 L613.25 567.65 L611.96 567.12 L611.28 567.99 L610.31 567.02 L611.18 566.34 L610.65 565.05 L609.55 565.19 L609.55 563.81 L610.65 563.95 L611.18 562.66 L610.31 561.98 L611.28 561.01 L611.96 561.88 L613.25 561.35 L613.11 560.25 L614.49 560.25 L614.35 561.35 L615.64 561.88 L616.32 561.01 L617.29 561.98 L616.42 562.66 L616.95 563.95 Z" fill="#2a2a2a"/>
<circle cx="613.8" cy="564.5" r="1.2" fill="#cfcfcf"/>
<!-- rounded squares -->
<rect x="626" y="555" width="13.7" height="12.1" rx="2" fill="#c8c8c8" stroke="#8a8a8a" stroke-width="0.8"/>
<rect x="624" y="553" width="13.7" height="12.1" rx="2" fill="#eaf3fb" stroke="#3c7eb0" stroke-width="1"/>
<!-- highlighted box -->
<rect x="644.7" y="550.8" width="21.1" height="19.4" rx="1.2" fill="#e9eef3" stroke="#92c2e6" stroke-width="0.9"/>
<path d="M647 555 L650 553 L660 553 L662 555 L662 567 L647 567 Z" fill="#e2e2e2" opacity="0.8"/>
<path d="M647 555 L649 553.2 L657.5 553.2 L657.5 559.5 L655.5 561 L647 561 Z" fill="#4a9cc8" stroke="#2a6a90" stroke-width="0.6"/>
<path d="M647 555 L655.5 555 L657.5 553.2 M655.5 555 L655.5 561" stroke="#2a6a90" stroke-width="0.5" fill="none"/>
<path d="M648 558 L654.5 557.5" stroke="#8ac8e8" stroke-width="0.8"/>
<path d="M658.5 561 L658.5 568 L660.3 566.3 L662 569.2 L663 568.6 L661.4 565.8 L663.6 565.6 Z" fill="#fff" stroke="#555" stroke-width="0.6"/>
<!-- timer refresh highlighted -->
<rect x="668.7" y="551.8" width="18.7" height="17.2" fill="#eef2f5" stroke="#999" stroke-width="0.8"/>
<rect x="669" y="552" width="9" height="2" fill="#2a72a6"/>
<rect x="678" y="552" width="9.2" height="2" fill="#8acbec"/>
<path d="M676 558.6 C678 556 683 556 684.6 560.5" fill="none" stroke="#2a6a9a" stroke-width="1.5"/>
<path d="M673 558.3 L676.6 556.3 L676.6 560.3 Z" fill="#2a6a9a"/>
<path d="M684.6 564.5 C684 567 680 567.6 677.5 566.6" fill="none" stroke="#2a6a9a" stroke-width="1.5"/>
<circle cx="673.4" cy="564.6" r="2.7" fill="#f4f4f4" stroke="#555" stroke-width="0.9"/>
<path d="M673.4 563.2 L673.4 564.8 L674.5 565.6" stroke="#555" stroke-width="0.6" fill="none"/>
<!-- paint sphere -->
<path d="M703 561 C703 556 707 553.5 711 553.5 C715 553.5 718 556 718 559 L712 561 Z" fill="#3a3a3a"/>
<circle cx="707.5" cy="557" r="1.5" fill="#888"/>
<path d="M702.5 561 L719 561 C718.5 565 715 567 710.8 567 C706.5 567 703 565 702.5 561 Z" fill="#a9d6ef" stroke="#5a8aa8" stroke-width="0.6"/>
<path d="M713 560 L719 554.5" stroke="#3a86b6" stroke-width="2"/>
<path d="M718 555 L719.5 553.8" stroke="#222" stroke-width="2"/>
<path d="M702 567.6 L719.5 567.6" stroke="#888" stroke-width="0.8"/>
<!-- 4 grid -->
<rect x="726.3" y="553.5" width="15.8" height="14" fill="#f2f2f2" stroke="#666" stroke-width="0.9"/>
<rect x="734.2" y="553.9" width="7.5" height="6.6" fill="#8ab8d8"/>
<path d="M734.2 553.5 L734.2 567.5 M726.3 560.5 L742.1 560.5" stroke="#666" stroke-width="0.9"/>
<!-- play -->
<path d="M758 558.2 L762.7 561.2 L758 564.3 Z" fill="#c4cdd4"/>
<!-- tree -->
<g stroke="#777" stroke-width="0.8" fill="none">
  <path d="M772.5 554 L772.5 563.8 L776.5 563.8 M772.5 557.8 L776.5 557.8 M778 558.5 L778 560.8 L781 560.8 M778 564.5 L778 567.5 L781 567.5"/>
</g>
<g fill="#3f8fbf" stroke="#2a6a90" stroke-width="0.5">
  <rect x="771" y="552.7" width="6.2" height="2.6" rx="0.6"/>
  <rect x="776" y="556.6" width="6" height="2.6" rx="0.6"/>
  <rect x="781" y="559.7" width="6" height="2.6" rx="0.6"/>
  <rect x="776" y="562.6" width="6" height="2.6" rx="0.6"/>
  <rect x="781" y="566.2" width="6" height="2.6" rx="0.6"/>
</g>
<!-- cube with cursor -->
<path d="M803.5 557 L808 552.8 L819 552.8 L819 564 L814.5 568.3 L803.5 568.3 Z" fill="#f2f2f2" stroke="#555" stroke-width="0.8" stroke-linejoin="round"/>
<path d="M803.5 557 L814.5 557 L819 552.8 M814.5 557 L814.5 568.3" fill="none" stroke="#666" stroke-width="0.6"/>
<path d="M807.5 556.5 L810.5 553.8 L818 553.8 L815 556.5 Z" fill="#7cc0e4"/>
<path d="M807.5 556.5 L815 556.5 L815 564 L807.5 564 Z" fill="#3f8fbf"/>
<path d="M815 556.5 L818 553.8 L818 561 L815 564 Z" fill="#2e76a6"/>
<path d="M811.5 558 L811.5 569 L814 566.6 L815.8 570.3 L817.3 569.6 L815.6 566 L819 565.8 Z" fill="#fff" stroke="#444" stroke-width="0.6" stroke-linejoin="round"/>
</svg>

</body></html>
